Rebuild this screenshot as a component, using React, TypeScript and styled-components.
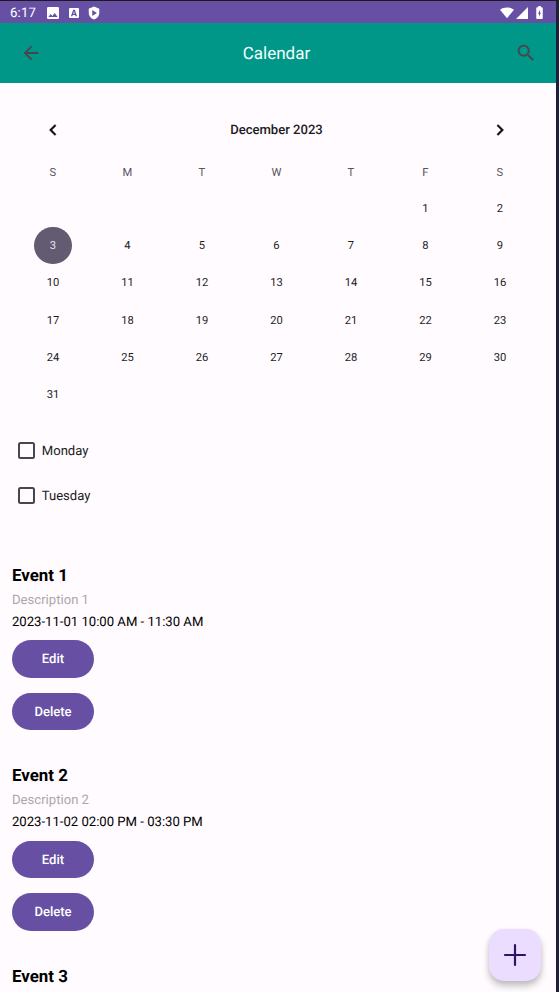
import React from "react";
import styled, { createGlobalStyle } from "styled-components";

const GlobalStyle = createGlobalStyle`
  *, *::before, *::after { box-sizing: border-box; }
  body {
    margin: 0;
    overflow: hidden;
    background: #1f1f3a;
    font-family: Roboto, "Noto Sans", sans-serif;
    text-rendering: geometricPrecision;
  }
  button { font-family: inherit; border: 0; padding: 0; text-rendering: inherit; }
`;

const Frame = styled.div`
  width: 559px;
  height: 992px;
  padding: 1px 3px 0 0;
  background: linear-gradient(#1b1a20 0 1px, #1f1f3a 1px);
  overflow: hidden;
`;

const Screen = styled.div`
  height: 991px;
  background: #fffbfe;
  overflow: hidden;
`;

const StatusBar = styled.div`
  height: 22.4px;
  padding: 1px 12px 0 10px;
  background: #6750a4;
  color: #fff;
  display: flex;
  align-items: center;
`;

const Clock = styled.span`
  width: 37px;
  padding-top: 2px;
  font-size: 13.2px;
  line-height: 22px;
  letter-spacing: 0.2px;
`;

const Notifications = styled.div`
  flex: 1;
  display: flex;
  align-items: center;
  gap: 10px;
  svg:last-child { margin-left: -1px; }
`;

const Signals = styled.div`
  display: flex;
  align-items: center;
  gap: 2px;
  svg:last-child { margin-left: 5px; }
`;

const Header = styled.header`
  height: 59.7px;
  padding: 0 19px 0 20px;
  background: #009788;
  display: grid;
  grid-template-columns: 22px 1fr 22px;
  align-items: center;
`;

const Title = styled.h1`
  margin: 0;
  padding: 1px 4px 0 0;
  text-align: center;
  color: #f4fffd;
  font-size: 17px;
  font-weight: 400;
  line-height: 24px;
`;

const IconButton = styled.button`
  display: flex;
  justify-content: center;
  align-items: center;
  background: transparent;
  color: #49454f;
`;

const Calendar = styled.section`
  padding: 28px 18.8px 0 15.7px;
  height: 345px;
`;

const MonthBar = styled.div`
  height: 37.3px;
  display: grid;
  grid-template-columns: 74.6px 1fr 74.6px;
  align-items: center;
  color: #1c1b1f;
  ${IconButton} {
    color: #111014;
    stroke: currentColor;
    stroke-width: 0.4;
  }
`;

const MonthLabel = styled.h2`
  margin: 0;
  padding-top: 1.5px;
  text-align: center;
  font-size: 13.07px;
  font-weight: 500;
`;

const Weekdays = styled.div`
  display: grid;
  grid-template-columns: repeat(7, 1fr);
  padding-top: 14px;
  height: 41.2px;
  line-height: 22px;
  text-align: center;
  font-size: 11.2px;
  color: #57545b;
`;

const Days = styled.div`
  display: grid;
  grid-template-columns: repeat(7, 1fr);
  grid-auto-rows: 37.33px;
  justify-items: center;
`;

const Day = styled.button<{ $selected?: boolean; $column?: number }>`
  width: 37.33px;
  height: 37.33px;
  border-radius: 50%;
  font-size: 11.2px;
  line-height: 37px;
  color: ${(p) => (p.$selected ? "#e9e3ee" : "#1c1b1f")};
  background: ${(p) => (p.$selected ? "#625b71" : "transparent")};
  grid-column-start: ${(p) => p.$column ?? "auto"};
`;

const Filters = styled.section`
  padding-left: 18.3px;
  height: 134.6px;
`;

const CheckRow = styled.label`
  height: 44.8px;
  display: flex;
  align-items: center;
  gap: 6.5px;
  color: #1c1b1f;
  font-size: 13.07px;
  line-height: 20px;
`;

const CheckText = styled.span`
  padding-top: 3px;
`;

const Box = styled.span`
  width: 17px;
  height: 17px;
  border: 2px solid #49454f;
  border-radius: 2.5px;
`;

const Event = styled.article`
  height: 200.8px;
  padding-left: 12px;
`;

const EventName = styled.h3`
  margin: 0;
  padding-top: 1px;
  font-size: 16.9px;
  line-height: 24px;
  font-weight: 700;
  color: #000;
`;

const EventText = styled.p<{ $muted?: boolean }>`
  margin: 0;
  padding-top: ${(p) => (p.$muted ? "1px" : "0")};
  font-size: 13.12px;
  line-height: ${(p) => (p.$muted ? "24px" : "19.5px")};
  color: ${(p) => (p.$muted ? "#aaa8aa" : "#000")};
`;

const Actions = styled.div`
  padding-top: 8.1px;
  display: flex;
  flex-direction: column;
  gap: 14.9px;
`;

const ActionButton = styled.button`
  width: 82px;
  height: 37.4px;
  padding-top: 2px;
  border-radius: 19px;
  background: #6750a4;
  color: #fff;
  font-size: 13.07px;
  font-weight: 500;
  line-height: 35.4px;
`;

const AddButton = styled.button`
  position: fixed;
  left: 489px;
  top: 929px;
  width: 52px;
  height: 52px;
  border-radius: 15px;
  background: #eaddff;
  box-shadow: 0 5px 7px rgba(0, 0, 0, 0.24), 0 1px 5px rgba(0, 0, 0, 0.06);
  display: flex;
  align-items: center;
  justify-content: center;
`;

type GlyphProps = { d: string; size: number; box?: string; width?: number };

const Glyph = ({ d, size, width, box = "0 0 24 24" }: GlyphProps) => (
  <svg width={width ?? size} height={size} viewBox={box} fill="currentColor" fillRule="evenodd" aria-hidden="true">
    <path d={d} />
  </svg>
);

const paths = {
  image: "M21 19V5c0-1.100-.9-2-2-2H5c-1.100 0-2 .9-2 2v14c0 1.100.9 2 2 2h14c1.100 0 2-.9 2-2zM8.500 13.500l2.500 3.010L14.500 12l4.500 6H5l3.500-4.500z",
  letter: "M5 3h14a2 2 0 0 1 2 2v14a2 2 0 0 1-2 2H5a2 2 0 0 1-2-2V5a2 2 0 0 1 2-2zM10.500 6L6.500 18h2.600l.8-2.500h4.200l.8 2.500h2.600L13.500 6zM10.700 13.200L12 9l1.300 4.200z",
  shield: "M12 1L3 4.500v7c0 5.500 3.800 9.900 9 11.500 5.200-1.600 9-6 9-11.500v-7zM9 7l8 5-8 5z",
  wifi: "M12 21L0 6.500C3.300 3.800 7.400 2.500 12 2.500s8.700 1.300 12 4z",
  cell: "M2 22h20V2z",
  battery: "M15.670 4H14V2h-4v2H8.330C7.600 4 7 4.600 7 5.330v15.340C7 21.400 7.600 22 8.330 22h7.340c.73 0 1.330-.6 1.330-1.330V5.330C17 4.600 16.400 4 15.670 4zM11.300 18.500v-4.700H9.800l2.900-6v4.700h1.500z",
  back: "M20 11H7.830l5.590-5.590L12 4l-8 8 8 8 1.410-1.410L7.830 13H20v-2z",
  search: "M15.500 14h-.79l-.28-.27C15.410 12.590 16 11.110 16 9.500 16 5.910 13.090 3 9.500 3S3 5.910 3 9.500 5.910 16 9.500 16c1.610 0 3.090-.59 4.230-1.570l.27.28v.79l5 4.990L20.490 19l-4.990-5zm-6 0C7.010 14 5 11.990 5 9.500S7.010 5 9.500 5 14 7.010 14 9.500 11.990 14 9.500 14z",
  previous: "M15.410 7.410L14 6l-6 6 6 6 1.410-1.410L10.830 12z",
  next: "M10 6L8.590 7.410 13.170 12l-4.580 4.590L10 18l6-6z",
};

const weekdays = ["S", "M", "T", "W", "T", "F", "S"];
const days = Array.from({ length: 31 }, (_, i) => i + 1);
const events = [
  { name: "Event 1", description: "Description 1", time: "2023-11-01 10:00 AM - 11:30 AM" },
  { name: "Event 2", description: "Description 2", time: "2023-11-02 02:00 PM - 03:30 PM" },
  { name: "Event 3" },
];

export default function App() {
  return (
    <Frame>
      <GlobalStyle />
      <Screen>
        <StatusBar>
          <Clock>6:17</Clock>
          <Notifications>
            <Glyph d={paths.image} size={12} box="3 3 18 18" />
            <Glyph d={paths.letter} size={10} box="3 3 18 18" />
            <Glyph d={paths.shield} size={14} width={12} box="2 0 20 24" />
          </Notifications>
          <Signals>
            <Glyph d={paths.wifi} size={14} width={14} box="0 0 24 24" />
            <Glyph d={paths.cell} size={12} box="2 2 20 20" />
            <Glyph d={paths.battery} size={13} width={9} box="6 2 12 20" />
          </Signals>
        </StatusBar>
        <Header>
          <IconButton aria-label="Back"><Glyph d={paths.back} size={22} /></IconButton>
          <Title>Calendar</Title>
          <IconButton aria-label="Search"><Glyph d={paths.search} size={22} /></IconButton>
        </Header>
        <Calendar>
          <MonthBar>
            <IconButton aria-label="Previous month"><Glyph d={paths.previous} size={22} /></IconButton>
            <MonthLabel>December 2023</MonthLabel>
            <IconButton aria-label="Next month"><Glyph d={paths.next} size={22} /></IconButton>
          </MonthBar>
          <Weekdays>
            {weekdays.map((day, i) => <span key={i}>{day}</span>)}
          </Weekdays>
          <Days>
            {days.map((day) => (
              <Day key={day} $selected={day === 3} $column={day === 1 ? 6 : undefined}>{day}</Day>
            ))}
          </Days>
        </Calendar>
        <Filters>
          <CheckRow><Box /><CheckText>Monday</CheckText></CheckRow>
          <CheckRow><Box /><CheckText>Tuesday</CheckText></CheckRow>
        </Filters>
        {events.map((event) => (
          <Event key={event.name}>
            <EventName>{event.name}</EventName>
            {event.time && (
              <>
                <EventText $muted>{event.description}</EventText>
                <EventText>{event.time}</EventText>
                <Actions>
                  <ActionButton>Edit</ActionButton>
                  <ActionButton>Delete</ActionButton>
                </Actions>
              </>
            )}
          </Event>
        ))}
      </Screen>
      <AddButton aria-label="Add event">
        <svg width="24" height="24" viewBox="0 0 24 24" stroke="#2f1465" strokeWidth="2.2" strokeLinecap="round">
          <path d="M12 2v20M2 12h20" />
        </svg>
      </AddButton>
    </Frame>
  );
}
